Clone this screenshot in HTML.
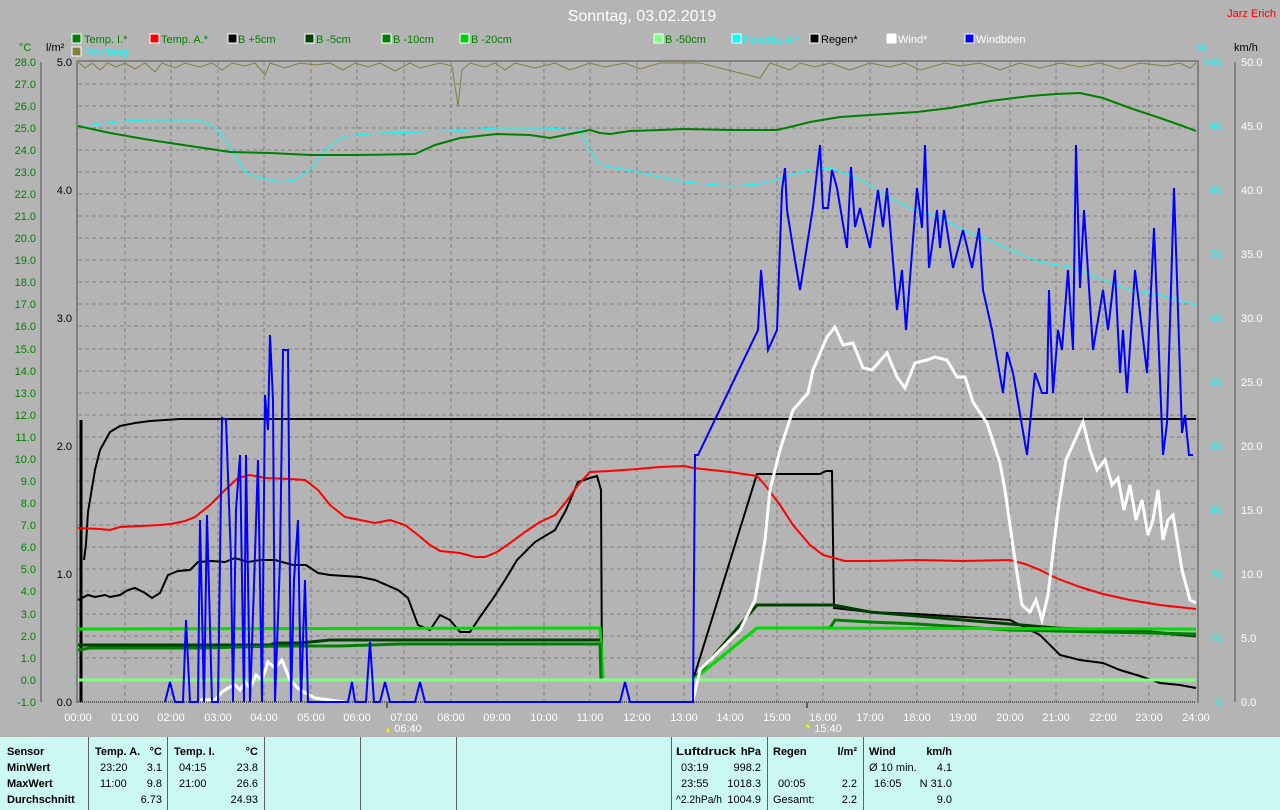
<!DOCTYPE html>
<html><head><meta charset="utf-8"><style>
html,body{margin:0;padding:0;background:#b4b4b4;width:1280px;height:810px;overflow:hidden}
svg{display:block}
text{font-family:"Liberation Sans",sans-serif;font-size:11px}
</style></head><body>
<svg width="1280" height="810" viewBox="0 0 1280 810" xmlns="http://www.w3.org/2000/svg">
<rect width="1280" height="810" fill="#b4b4b4"/>
<text x="642" y="21" fill="#fff" text-anchor="middle" style="font-size:16px">Sonntag, 03.02.2019</text>
<text x="1276" y="17" fill="#f00" text-anchor="end" style="font-size:11px">Jarz Erich</text>
<g stroke="#fff" stroke-width="1">
<rect x="72" y="34" width="9" height="9" fill="#008000"/>
<rect x="72" y="47" width="9" height="9" fill="#808040"/>
<rect x="150" y="34" width="9" height="9" fill="#f00"/>
<rect x="228" y="34" width="9" height="9" fill="#000"/>
<rect x="305" y="34" width="9" height="9" fill="#004000"/>
<rect x="382" y="34" width="9" height="9" fill="#008000"/>
<rect x="460" y="34" width="9" height="9" fill="#00d000"/>
<rect x="654" y="34" width="9" height="9" fill="#80ff80"/>
<rect x="732" y="34" width="9" height="9" fill="#0ff"/>
<rect x="810" y="34" width="9" height="9" fill="#000"/>
<rect x="887" y="34" width="9" height="9" fill="#fff"/>
<rect x="965" y="34" width="9" height="9" fill="#00f"/>
</g>
<g fill="#008000">
<text x="84" y="43">Temp. I.*</text><text x="161" y="43">Temp. A.*</text><text x="238" y="43">B +5cm</text>
<text x="316" y="43">B -5cm</text><text x="393" y="43">B -10cm</text><text x="471" y="43">B -20cm</text>
<text x="665" y="43">B -50cm</text></g>
<text x="84" y="56" fill="#0ff">Empfang</text>
<text x="743" y="43" fill="#0ff">Feuchte A.*</text>
<text x="821" y="43" fill="#000">Regen*</text>
<text x="898" y="43" fill="#fff">Wind*</text>
<text x="976" y="43" fill="#fff">Windböen</text>
<text x="19" y="51" fill="#008000">°C</text>
<text x="46" y="51" fill="#000">l/m²</text>
<text x="1196" y="51" fill="#0ff">%</text>
<text x="1234" y="51" fill="#000">km/h</text>
<g stroke="#808080" stroke-dasharray="4,3" stroke-width="1">
<path d="M78 84H1196M78 106H1196M78 128H1196M78 150H1196M78 172H1196M78 194H1196M78 216H1196M78 238H1196M78 260H1196M78 282H1196M78 304H1196M78 326H1196M78 349H1196M78 371H1196M78 393H1196M78 415H1196M78 437H1196M78 459H1196M78 481H1196M78 503H1196M78 525H1196M78 547H1196M78 569H1196M78 591H1196M78 614H1196M78 636H1196M78 658H1196M78 680H1196"/>
<path d="M125 62V702M171 62V702M218 62V702M264 62V702M311 62V702M357 62V702M404 62V702M451 62V702M497 62V702M544 62V702M590 62V702M637 62V702M684 62V702M730 62V702M777 62V702M823 62V702M870 62V702M917 62V702M963 62V702M1010 62V702M1056 62V702M1103 62V702M1149 62V702"/>
</g>
<g stroke="#808080" stroke-width="2" fill="none">
<path d="M77 61V703M77 61H1198V703"/>
<path d="M41 62V702M1235 62V702"/>
</g>
<path d="M78 702H1196" stroke="#000" stroke-dasharray="1,1"/>
<g fill="#008000" text-anchor="end">
<text x="36" y="66">28.0</text><text x="36" y="88">27.0</text><text x="36" y="110">26.0</text><text x="36" y="132">25.0</text><text x="36" y="154">24.0</text><text x="36" y="176">23.0</text><text x="36" y="198">22.0</text><text x="36" y="220">21.0</text><text x="36" y="242">20.0</text><text x="36" y="264">19.0</text><text x="36" y="286">18.0</text><text x="36" y="308">17.0</text><text x="36" y="330">16.0</text><text x="36" y="353">15.0</text><text x="36" y="375">14.0</text><text x="36" y="397">13.0</text><text x="36" y="419">12.0</text><text x="36" y="441">11.0</text><text x="36" y="463">10.0</text><text x="36" y="485">9.0</text><text x="36" y="507">8.0</text><text x="36" y="529">7.0</text><text x="36" y="551">6.0</text><text x="36" y="573">5.0</text><text x="36" y="595">4.0</text><text x="36" y="618">3.0</text><text x="36" y="640">2.0</text><text x="36" y="662">1.0</text><text x="36" y="684">0.0</text><text x="36" y="706">-1.0</text>
</g>
<g fill="#000" text-anchor="end">
<text x="72" y="66">5.0</text><text x="72" y="194">4.0</text><text x="72" y="322">3.0</text><text x="72" y="450">2.0</text><text x="72" y="578">1.0</text><text x="72" y="706">0.0</text>
</g>
<g fill="#0ff" text-anchor="end">
<text x="1222" y="66">100</text><text x="1222" y="130">90</text><text x="1222" y="194">80</text><text x="1222" y="258">70</text><text x="1222" y="322">60</text><text x="1222" y="386">50</text><text x="1222" y="450">40</text><text x="1222" y="514">30</text><text x="1222" y="578">20</text><text x="1222" y="642">10</text><text x="1222" y="706">0</text>
</g>
<g fill="#fff">
<text x="1241" y="66">50.0</text><text x="1241" y="130">45.0</text><text x="1241" y="194">40.0</text><text x="1241" y="258">35.0</text><text x="1241" y="322">30.0</text><text x="1241" y="386">25.0</text><text x="1241" y="450">20.0</text><text x="1241" y="514">15.0</text><text x="1241" y="578">10.0</text><text x="1241" y="642">5.0</text><text x="1241" y="706">0.0</text>
</g>
<g fill="#fff" text-anchor="middle">
<text x="78" y="721">00:00</text><text x="125" y="721">01:00</text><text x="171" y="721">02:00</text><text x="218" y="721">03:00</text><text x="264" y="721">04:00</text><text x="311" y="721">05:00</text><text x="357" y="721">06:00</text><text x="404" y="721">07:00</text><text x="451" y="721">08:00</text><text x="497" y="721">09:00</text><text x="544" y="721">10:00</text><text x="590" y="721">11:00</text><text x="637" y="721">12:00</text><text x="684" y="721">13:00</text><text x="730" y="721">14:00</text><text x="777" y="721">15:00</text><text x="823" y="721">16:00</text><text x="870" y="721">17:00</text><text x="917" y="721">18:00</text><text x="963" y="721">19:00</text><text x="1010" y="721">20:00</text><text x="1056" y="721">21:00</text><text x="1103" y="721">22:00</text><text x="1149" y="721">23:00</text><text x="1196" y="721">24:00</text>
<text x="408" y="732">06:40</text><text x="828" y="732">15:40</text>
</g>
<path d="M388 728l-2 3h2l-1 3 3-4h-2l1-2z" fill="#ff0"/><path d="M808 724l-2 3h2l-1 3 3-4h-2l1-2z" fill="#ff0"/>
<path d="M387 702v6M807 702v6" stroke="#606060" stroke-width="2"/>
<polyline fill="none" stroke="#808040" points="78,62 85,68 92,63 100,70 108,63 116,67 125,63 135,69 145,63 155,72 162,63 175,68 185,63 200,67 212,63 222,70 232,63 245,66 255,63 265,75 270,63 285,68 300,63 316,65 330,63 343,70 355,63 368,67 380,63 395,71 410,63 420,68 440,63 452,66 458,106 462,70 470,63 485,67 495,63 505,70 515,63 535,68 555,63 570,70 590,63 605,67 625,63 640,69 660,63 700,63 760,78 770,63 790,70 800,63 815,67 830,63 850,70 870,63 890,67 905,63 920,70 945,63 960,66 980,63 1000,70 1020,63 1040,68 1060,63 1080,67 1100,63 1120,69 1140,63 1165,66 1180,63 1190,68 1196,63"/>
<polyline fill="none" stroke="#0ff" points="78,127 100,124 125,121 150,120 200,120 215,128 225,140 235,155 245,172 260,178 280,182 295,180 310,170 325,150 345,136 380,133 420,132 451,131 497,128 544,128 580,130 590,150 600,165 637,172 684,182 730,186 760,184 775,180 790,175 810,170 830,168 850,175 870,185 890,198 910,208 940,218 963,230 990,240 1010,250 1040,262 1075,268 1103,280 1130,290 1160,295 1196,305"/>
<polyline fill="none" stroke="#008000" stroke-width="2" points="78,126 110,133 150,140 190,146 230,152 270,153 311,155 357,155 415,154 435,145 460,138 497,134 530,135 550,138 570,134 590,130 600,133 610,134 630,131 660,130 684,129 730,130 777,130 790,127 810,122 840,117 870,115 917,112 950,108 990,101 1030,96 1056,94 1080,93 1103,98 1130,108 1160,118 1180,125 1196,131"/>
<path d="M81 420V702" stroke="#000" stroke-width="3"/>
<polyline fill="none" stroke="#000" stroke-width="2" points="84,560 86,544 88,512 95,470 100,450 110,432 120,426 135,423 150,421 180,419 1196,419"/>
<polyline fill="none" stroke="#000" stroke-width="2" points="78,600 88,595 95,597 105,595 110,597 120,595 128,590 135,588 145,593 152,598 160,593 168,575 178,571 190,570 198,562 212,561 225,562 235,558 248,562 260,560 275,560 293,565 306,565 318,573 330,575 360,577 375,580 398,590 408,598 418,625 430,630 440,615 450,620 460,632 470,632 480,617 492,600 505,580 517,560 535,542 555,530 566,510 578,482 590,478 597,476 601,490 602,680"/>
<polyline fill="none" stroke="#000" stroke-width="2" points="693,680 757,474 820,474 826,471 832,471 834,608 870,612 917,614 963,617 1010,620 1040,635 1060,655 1080,660 1103,663 1120,670 1140,676 1160,683 1180,685 1196,688"/>
<polyline fill="none" stroke="#00dd00" stroke-width="3" points="78,629 600,628 602,660 603,678"/>
<polyline fill="none" stroke="#004000" stroke-width="3" points="78,645 270,645 275,643 300,643 330,640 600,640"/>
<polyline fill="none" stroke="#008000" stroke-width="3" points="78,650 90,648 200,648 280,646 340,646 400,644 600,644 601,680"/>
<polyline fill="none" stroke="#004000" stroke-width="3" points="693,680 757,605 833,605 870,612 917,616 963,620 1010,624 1056,628 1103,630 1150,632 1196,636"/>
<polyline fill="none" stroke="#008000" stroke-width="3" points="693,680 757,628 830,628 835,620 870,622 917,624 963,627 1010,630 1103,632 1196,634"/>
<polyline fill="none" stroke="#00dd00" stroke-width="3" points="693,680 757,628 1196,629"/>
<path d="M78 680H1196" stroke="#80ff80" stroke-width="3"/>
<polyline fill="none" stroke="#f00" stroke-width="2" points="78,528 100,529 110,530 120,527 140,526 160,525 171,524 185,521 195,517 210,505 225,490 238,478 250,475 265,478 290,479 305,480 318,490 330,505 345,517 360,520 375,523 390,520 405,525 418,535 430,545 440,551 460,553 475,557 485,557 497,552 510,543 525,532 540,522 555,515 566,502 578,485 590,472 610,471 637,469 660,467 684,466 693,468 730,472 757,476 765,485 780,505 793,525 810,545 823,555 845,561 870,561 917,560 963,561 1010,560 1025,564 1040,570 1056,578 1080,587 1103,594 1130,600 1160,605 1196,609"/>
<polyline fill="none" stroke="#fff" stroke-width="3" points="200,700 215,700 222,692 228,688 235,685 240,690 245,682 250,688 256,675 262,680 268,662 275,668 282,660 290,680 300,690 315,698 330,700 345,702"/>
<polyline fill="none" stroke="#fff" stroke-width="3" points="693,700 700,670 720,650 740,630 755,600 765,540 770,490 780,450 793,410 808,393 813,370 827,337 835,327 843,345 853,343 863,368 872,370 887,353 897,377 905,388 915,363 927,360 935,357 947,360 957,377 965,377 973,402 987,423 1000,463 1005,490 1015,560 1022,605 1030,612 1036,600 1042,620 1048,595 1058,510 1066,460 1075,440 1083,422 1090,450 1097,470 1105,460 1112,485 1118,478 1124,510 1130,485 1136,520 1142,500 1148,535 1153,520 1158,490 1163,540 1168,520 1173,515 1178,545 1182,570 1190,600 1196,603"/>
<polyline fill="none" stroke="#00f" stroke-width="2" points="165,702 170,682 175,702 183,702 186,620 190,702 198,702 200,520 204,702 207,515 212,702 218,702 222,418 226,420 231,560 233,702 236,510 240,455 244,702 246,455 250,702 254,585 258,460 262,702 265,395 268,430 270,335 273,400 275,702 280,560 283,350 288,350 291,702 294,580 298,520 301,702 305,580 308,702 312,702 318,702 348,702 352,682 355,702 366,702 370,642 374,702 380,702 385,682 390,702 415,702 420,682 425,702 620,702 625,682 630,702 693,702 695,455 698,455 758,330 761,270 768,350 777,330 782,190 785,168 787,210 793,248 800,290 813,207 820,145 823,208 828,208 832,170 837,188 847,248 851,167 855,227 860,208 870,248 878,190 883,227 887,188 897,310 902,270 906,330 917,188 922,228 925,145 929,268 937,210 940,248 944,210 953,268 963,230 972,268 979,228 983,290 992,330 1003,393 1007,352 1013,373 1027,455 1035,373 1042,393 1047,393 1049,290 1053,393 1058,330 1062,350 1068,270 1073,350 1076,145 1080,288 1084,210 1093,350 1103,290 1108,330 1115,270 1120,373 1123,330 1127,393 1135,270 1147,373 1154,228 1163,455 1167,423 1174,188 1182,433 1185,415 1189,455 1193,455"/>
<rect x="0" y="737" width="1280" height="73" fill="#ccf8f4"/>
<g stroke="#606060" stroke-width="1"><path d="M88.5 737V810M167.5 737V810M264.5 737V810M360.5 737V810M456.5 737V810M671.5 737V810M767.5 737V810M863.5 737V810"/></g>
<g fill="#000">
<text x="7" y="755" font-weight="bold">Sensor</text>
<text x="7" y="771" font-weight="bold">MinWert</text>
<text x="7" y="787" font-weight="bold">MaxWert</text>
<text x="7" y="803" font-weight="bold">Durchschnitt</text>
<text x="95" y="755" font-weight="bold">Temp. A.</text><text x="162" y="755" text-anchor="end" font-weight="bold">°C</text>
<text x="100" y="771">23:20</text><text x="162" y="771" text-anchor="end">3.1</text>
<text x="100" y="787">11:00</text><text x="162" y="787" text-anchor="end">9.8</text>
<text x="162" y="803" text-anchor="end">6.73</text>
<text x="174" y="755" font-weight="bold">Temp. I.</text><text x="258" y="755" text-anchor="end" font-weight="bold">°C</text>
<text x="179" y="771">04:15</text><text x="258" y="771" text-anchor="end">23.8</text>
<text x="179" y="787">21:00</text><text x="258" y="787" text-anchor="end">26.6</text>
<text x="258" y="803" text-anchor="end">24.93</text>
<text x="676" y="755" font-weight="bold" textLength="60" lengthAdjust="spacingAndGlyphs">Luftdruck</text><text x="761" y="755" text-anchor="end" font-weight="bold">hPa</text>
<text x="681" y="771">03:19</text><text x="761" y="771" text-anchor="end">998.2</text>
<text x="681" y="787">23:55</text><text x="761" y="787" text-anchor="end">1018.3</text>
<text x="676" y="803" textLength="46" lengthAdjust="spacingAndGlyphs">^2.2hPa/h</text><text x="761" y="803" text-anchor="end">1004.9</text>
<text x="773" y="755" font-weight="bold">Regen</text><text x="857" y="755" text-anchor="end" font-weight="bold">l/m²</text>
<text x="778" y="787">00:05</text><text x="857" y="787" text-anchor="end">2.2</text>
<text x="773" y="803">Gesamt:</text><text x="857" y="803" text-anchor="end">2.2</text>
<text x="869" y="755" font-weight="bold">Wind</text><text x="952" y="755" text-anchor="end" font-weight="bold">km/h</text>
<text x="869" y="771">Ø 10 min.</text><text x="952" y="771" text-anchor="end">4.1</text>
<text x="874" y="787">16:05</text><text x="952" y="787" text-anchor="end">N 31.0</text>
<text x="952" y="803" text-anchor="end">9.0</text>
</g>
</svg>
</body></html>
